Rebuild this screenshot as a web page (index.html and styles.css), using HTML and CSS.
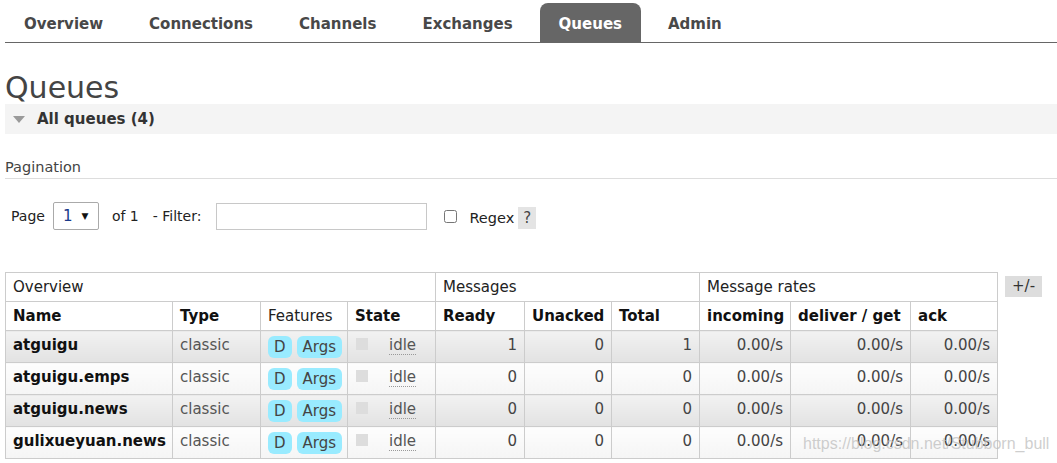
FILE: index.html
```html
<!DOCTYPE html>
<html lang="en">

<head>
    <meta charset="UTF-8">
    <title>RabbitMQ Management - Queues</title>
    <link rel="stylesheet" href="styles.css">
</head>

<body>
    <ul class="tabs">
        <li><a href="#">Overview</a></li>
        <li><a href="#">Connections</a></li>
        <li><a href="#">Channels</a></li>
        <li><a href="#">Exchanges</a></li>
        <li class="active"><a href="#">Queues</a></li>
        <li><a href="#">Admin</a></li>
    </ul>

    <h1>Queues</h1>

    <div class="section">
        <h2 class="section-title"><span class="arrow"></span>All queues (4)</h2>

        <h3 class="pagination-title">Pagination</h3>
        <div class="pagination">
            <span>Page</span>
            <span class="page-select">1 <span class="caret">&#9660;</span></span>
            <span>of 1</span>
            <span>- Filter:</span>
            <input type="text" class="filter">
            <input type="checkbox" class="regex-box">
            <span class="regex-label">Regex</span>
            <span class="help">?</span>
        </div>

        <div class="table-wrap">
            <table class="list">
                <colgroup>
                    <col style="width: 167px">
                    <col style="width: 88px">
                    <col style="width: 87px">
                    <col style="width: 88px">
                    <col style="width: 89px">
                    <col style="width: 87px">
                    <col style="width: 88px">
                    <col style="width: 91px">
                    <col style="width: 120px">
                    <col style="width: 87px">
                </colgroup>
                <thead>
                    <tr class="group">
                        <th colspan="4">Overview</th>
                        <th colspan="3">Messages</th>
                        <th colspan="3">Message rates</th>
                    </tr>
                    <tr>
                        <th>Name</th>
                        <th>Type</th>
                        <th class="plain">Features</th>
                        <th>State</th>
                        <th>Ready</th>
                        <th>Unacked</th>
                        <th>Total</th>
                        <th>incoming</th>
                        <th>deliver / get</th>
                        <th>ack</th>
                    </tr>
                </thead>
                <tbody>
                    <tr class="alt">
                        <td class="name">atguigu</td>
                        <td>classic</td>
                        <td class="features"><span class="badge">D</span><span class="badge">Args</span></td>
                        <td><span class="state-box"></span><abbr class="idle">idle</abbr></td>
                        <td class="num">1</td>
                        <td class="num">0</td>
                        <td class="num">1</td>
                        <td class="num">0.00/s</td>
                        <td class="num">0.00/s</td>
                        <td class="num">0.00/s</td>
                    </tr>
                    <tr>
                        <td class="name">atguigu.emps</td>
                        <td>classic</td>
                        <td class="features"><span class="badge">D</span><span class="badge">Args</span></td>
                        <td><span class="state-box"></span><abbr class="idle">idle</abbr></td>
                        <td class="num">0</td>
                        <td class="num">0</td>
                        <td class="num">0</td>
                        <td class="num">0.00/s</td>
                        <td class="num">0.00/s</td>
                        <td class="num">0.00/s</td>
                    </tr>
                    <tr class="alt">
                        <td class="name">atguigu.news</td>
                        <td>classic</td>
                        <td class="features"><span class="badge">D</span><span class="badge">Args</span></td>
                        <td><span class="state-box"></span><abbr class="idle">idle</abbr></td>
                        <td class="num">0</td>
                        <td class="num">0</td>
                        <td class="num">0</td>
                        <td class="num">0.00/s</td>
                        <td class="num">0.00/s</td>
                        <td class="num">0.00/s</td>
                    </tr>
                    <tr>
                        <td class="name">gulixueyuan.news</td>
                        <td>classic</td>
                        <td class="features"><span class="badge">D</span><span class="badge">Args</span></td>
                        <td><span class="state-box"></span><abbr class="idle">idle</abbr></td>
                        <td class="num">0</td>
                        <td class="num">0</td>
                        <td class="num">0</td>
                        <td class="num">0.00/s</td>
                        <td class="num">0.00/s</td>
                        <td class="num">0.00/s</td>
                    </tr>
                </tbody>
            </table>
            <span class="toggle">+/-</span>
        </div>
    </div>

    <div class="watermark">https://blog.csdn.net/Stubborn_bull</div>
</body>

</html>
```

FILE: styles.css
```css
body {
    font-family: "DejaVu Sans", Verdana, sans-serif;
    font-size: 15px;
    color: #444;
    margin: 0;
    padding: 0 0 0 5px;
    overflow: hidden;
}

a {
    text-decoration: none;
}

.tabs {
    list-style: none;
    margin: 3px 0 0;
    padding: 0;
    display: flex;
    gap: 8px;
    border-bottom: 1px solid #666;
}

.tabs li a {
    display: block;
    padding: 10px 19px 6px;
    line-height: 23px;
    font-weight: bold;
    color: #484848;
    border-radius: 8px 8px 0 0;
}

.tabs li.active a {
    background-color: #666;
    color: #fff;
}

h1 {
    font-size: 30px;
    font-weight: normal;
    line-height: 32px;
    margin: 29px 0 0;
    color: #444;
}

.section-title {
    display: flex;
    align-items: center;
    height: 30px;
    margin: 0;
    background-color: #f4f4f4;
    font-size: 15px;
    font-weight: bold;
    color: #333;
}

.arrow {
    width: 0;
    height: 0;
    margin: 0 12px 0 8px;
    border-left: 6px solid transparent;
    border-right: 6px solid transparent;
    border-top: 7px solid #9a9a9a;
}

.pagination-title {
    font-size: 14.5px;
    font-weight: normal;
    color: #444;
    margin: 22px 0 0;
    line-height: 22px;
    border-bottom: 1px solid #ddd;
}

.pagination {
    display: flex;
    align-items: center;
    margin-top: 23px;
    padding-left: 6px;
    font-size: 14px;
    color: #222;
    height: 28px;
}

.page-select {
    display: flex;
    align-items: center;
    box-sizing: border-box;
    width: 46px;
    height: 28px;
    margin: 0 13px 0 8px;
    padding-left: 9px;
    border: 1px solid #aaa;
    border-radius: 2px;
    font-size: 15px;
    color: #1a3a8a;
}

.caret {
    font-size: 9px;
    color: #111;
    margin-left: 9px;
}

.pagination span + span + span {
    margin-right: 14px;
}

.pagination .regex-label,
.pagination .help {
    margin-right: 0;
}

.filter {
    box-sizing: border-box;
    width: 211px;
    height: 27px;
    margin: 0 0 0 1px;
    border: 1px solid #c8c8c8;
    padding: 2px 4px;
}

.regex-box {
    width: 13px;
    height: 13px;
    margin: 0 12px 0 17px;
}

.regex-label {
    margin-top: 4px;
    font-size: 14.5px;
}

.help {
    display: inline-block;
    margin-left: 4px;
    width: 18px;
    height: 22px;
    line-height: 23px;
    text-align: center;
    font-size: 15px;
    background-color: #e4e4e4;
    color: #444;
    margin-top: 4px;
}

.table-wrap {
    display: flex;
    align-items: flex-start;
    gap: 7px;
    margin-top: 42px;
}

.list {
    border-collapse: collapse;
    table-layout: fixed;
    width: 992px;
    font-size: 15px;
}

.list th,
.list td {
    border: 1px solid #ccc;
    padding: 4px 7px;
    line-height: 20px;
    text-align: left;
    vertical-align: top;
}

.list th {
    color: #111;
    font-weight: bold;
}

.list tr.group th,
.list th.plain {
    font-weight: normal;
    color: #222;
}

.list td {
    padding-bottom: 7px;
    color: #555;
    background: linear-gradient(#fdfdfd, #f5f5f5);
    white-space: nowrap;
}

.list tr.alt td {
    background: linear-gradient(#f2f2f2, #e2e2e2);
}

.list td.name {
    font-weight: bold;
    color: #111;
}

.list td.num {
    text-align: right;
    color: #444;
}

.list td.features {
    padding: 5px 7px 4px;
}

.badge {
    display: inline-block;
    vertical-align: top;
    line-height: 22px;
    padding: 0 6px;
    margin-right: 5px;
    border-radius: 6px;
    background-color: #99ebff;
    color: #444;
}

.state-box {
    display: inline-block;
    vertical-align: top;
    width: 12px;
    height: 12px;
    margin: 3px 21px 0 1px;
    background-color: #ddd;
}

.idle {
    text-decoration: none;
    border-bottom: 1px dotted #999;
    color: #555;
}

.toggle {
    margin-top: 4px;
    padding: 0 7px;
    line-height: 21px;
    background-color: #ddd;
    color: #333;
}

.watermark {
    position: absolute;
    left: 803px;
    top: 435px;
    font-family: "Liberation Sans", Arial, sans-serif;
    font-size: 16px;
    color: rgba(190, 190, 190, 0.75);
}
```
